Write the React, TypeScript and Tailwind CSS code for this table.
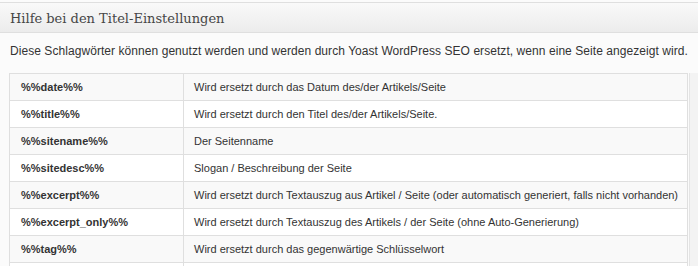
import React from "react";

const rows: [string, string][] = [
  ["%%date%%", "Wird ersetzt durch das Datum des/der Artikels/Seite"],
  ["%%title%%", "Wird ersetzt durch den Titel des/der Artikels/Seite."],
  ["%%sitename%%", "Der Seitenname"],
  ["%%sitedesc%%", "Slogan / Beschreibung der Seite"],
  ["%%excerpt%%", "Wird ersetzt durch Textauszug aus Artikel / Seite (oder automatisch generiert, falls nicht vorhanden)"],
  ["%%excerpt_only%%", "Wird ersetzt durch Textauszug des Artikels / der Seite (ohne Auto-Generierung)"],
  ["%%tag%%", "Wird ersetzt durch das gegenwärtige Schlüsselwort"],
  ["%%category%%", "Wird ersetzt durch die Kategorien des Artikels"],
];

export default function App() {
  return (
    <div className="w-[698px] h-[266px] overflow-hidden bg-[#fbfbfb] font-['Liberation_Sans',Arial,sans-serif] text-[#333]">
      <div className="h-[2px]" />
      {/* header bar */}
      <div className="h-[31px] border-t border-b border-[#dfdfdf] bg-gradient-to-b from-[#f9f9f9] to-[#ececec] flex items-center pl-[10px]">
        <h3 className="font-['DejaVu_Serif',Georgia,serif] text-[13px] text-[#464646] leading-none pt-[1px]">
          Hilfe bei den Titel-Einstellungen
        </h3>
      </div>

      <p className="pl-[10px] pt-[10px] h-[40px] text-[12px] leading-[16px] tracking-[0.06px] whitespace-nowrap">
        Diese Schlagwörter können genutzt werden und werden durch Yoast WordPress SEO ersetzt, wenn eine Seite angezeigt wird.
      </p>

      <div className="flex">
        <table className="ml-[9px] w-[679px] table-fixed border-collapse border border-[#dfdfdf] text-[11px]">
          <tbody>
            {rows.map(([tag, desc], i) => (
              <tr key={tag} className={i % 2 === 0 ? "bg-[#f9f9f9]" : "bg-white"}>
                <td className="w-[174px] h-[27px] border-b border-r border-[#dfdfdf] pl-[11px] font-bold whitespace-nowrap">
                  {tag}
                </td>
                <td className="h-[27px] border-b border-[#dfdfdf] pl-[10px] whitespace-nowrap">{desc}</td>
              </tr>
            ))}
          </tbody>
        </table>
        <div className="ml-[1px] w-[9px] bg-[#f3f3f3] border-l border-[#e4e4e4]" />
      </div>
    </div>
  );
}
